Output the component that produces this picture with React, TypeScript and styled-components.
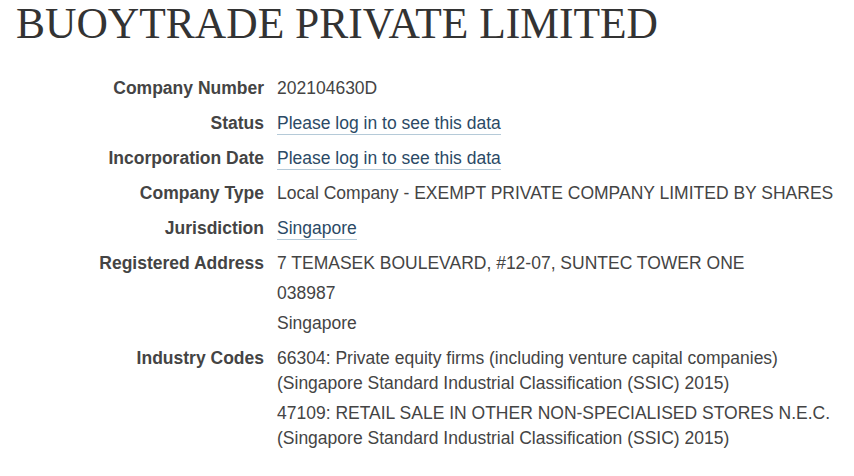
import React from "react";
import styled, { createGlobalStyle } from "styled-components";

const Global = createGlobalStyle`
  html, body { margin: 0; padding: 0; background: #fff; }
  body { font-family: "Liberation Sans", Arial, sans-serif; color: #444; }
`;

const Page = styled.div`
  padding: 0 16px;
`;

const Title = styled.h1`
  font-family: "Liberation Serif", "Times New Roman", serif;
  font-weight: normal;
  font-size: 43.5px;
  line-height: 46px;
  color: #333;
  margin: 0 0 30px 0;
`;

const List = styled.dl`
  display: grid;
  grid-template-columns: 248px 1fr;
  column-gap: 13px;
  row-gap: 10px;
  margin: 0;
  font-size: 17.5px;
  line-height: 25px;
`;

const Term = styled.dt`
  font-weight: bold;
  text-align: right;
  color: #444;
  white-space: nowrap;
`;

const Def = styled.dd`
  margin: 0;
  display: flex;
  flex-direction: column;
  gap: 5px;
  color: #444;
`;

const Line = styled.div``;

const Link = styled.a`
  color: #2b4a66;
  text-decoration: none;
  border-bottom: 1px solid #b5cad8;
  padding-bottom: 1px;
`;

type Row = { label: string; lines: (string | { link: string })[] };

const rows: Row[] = [
  { label: "Company Number", lines: ["202104630D"] },
  { label: "Status", lines: [{ link: "Please log in to see this data" }] },
  { label: "Incorporation Date", lines: [{ link: "Please log in to see this data" }] },
  { label: "Company Type", lines: ["Local Company - EXEMPT PRIVATE COMPANY LIMITED BY SHARES"] },
  { label: "Jurisdiction", lines: [{ link: "Singapore" }] },
  {
    label: "Registered Address",
    lines: ["7 TEMASEK BOULEVARD, #12-07, SUNTEC TOWER ONE", "038987", "Singapore"],
  },
  {
    label: "Industry Codes",
    lines: [
      "66304: Private equity firms (including venture capital companies) (Singapore Standard Industrial Classification (SSIC) 2015)",
      "47109: RETAIL SALE IN OTHER NON-SPECIALISED STORES N.E.C. (Singapore Standard Industrial Classification (SSIC) 2015)",
    ],
  },
];

export default function App() {
  return (
    <Page>
      <Global />
      <Title>BUOYTRADE PRIVATE LIMITED</Title>
      <List>
        {rows.map((r) => (
          <React.Fragment key={r.label}>
            <Term>{r.label}</Term>
            <Def>
              {r.lines.map((l, i) => (
                <Line key={i}>
                  {typeof l === "string" ? l : <Link href="#">{l.link}</Link>}
                </Line>
              ))}
            </Def>
          </React.Fragment>
        ))}
      </List>
    </Page>
  );
}
